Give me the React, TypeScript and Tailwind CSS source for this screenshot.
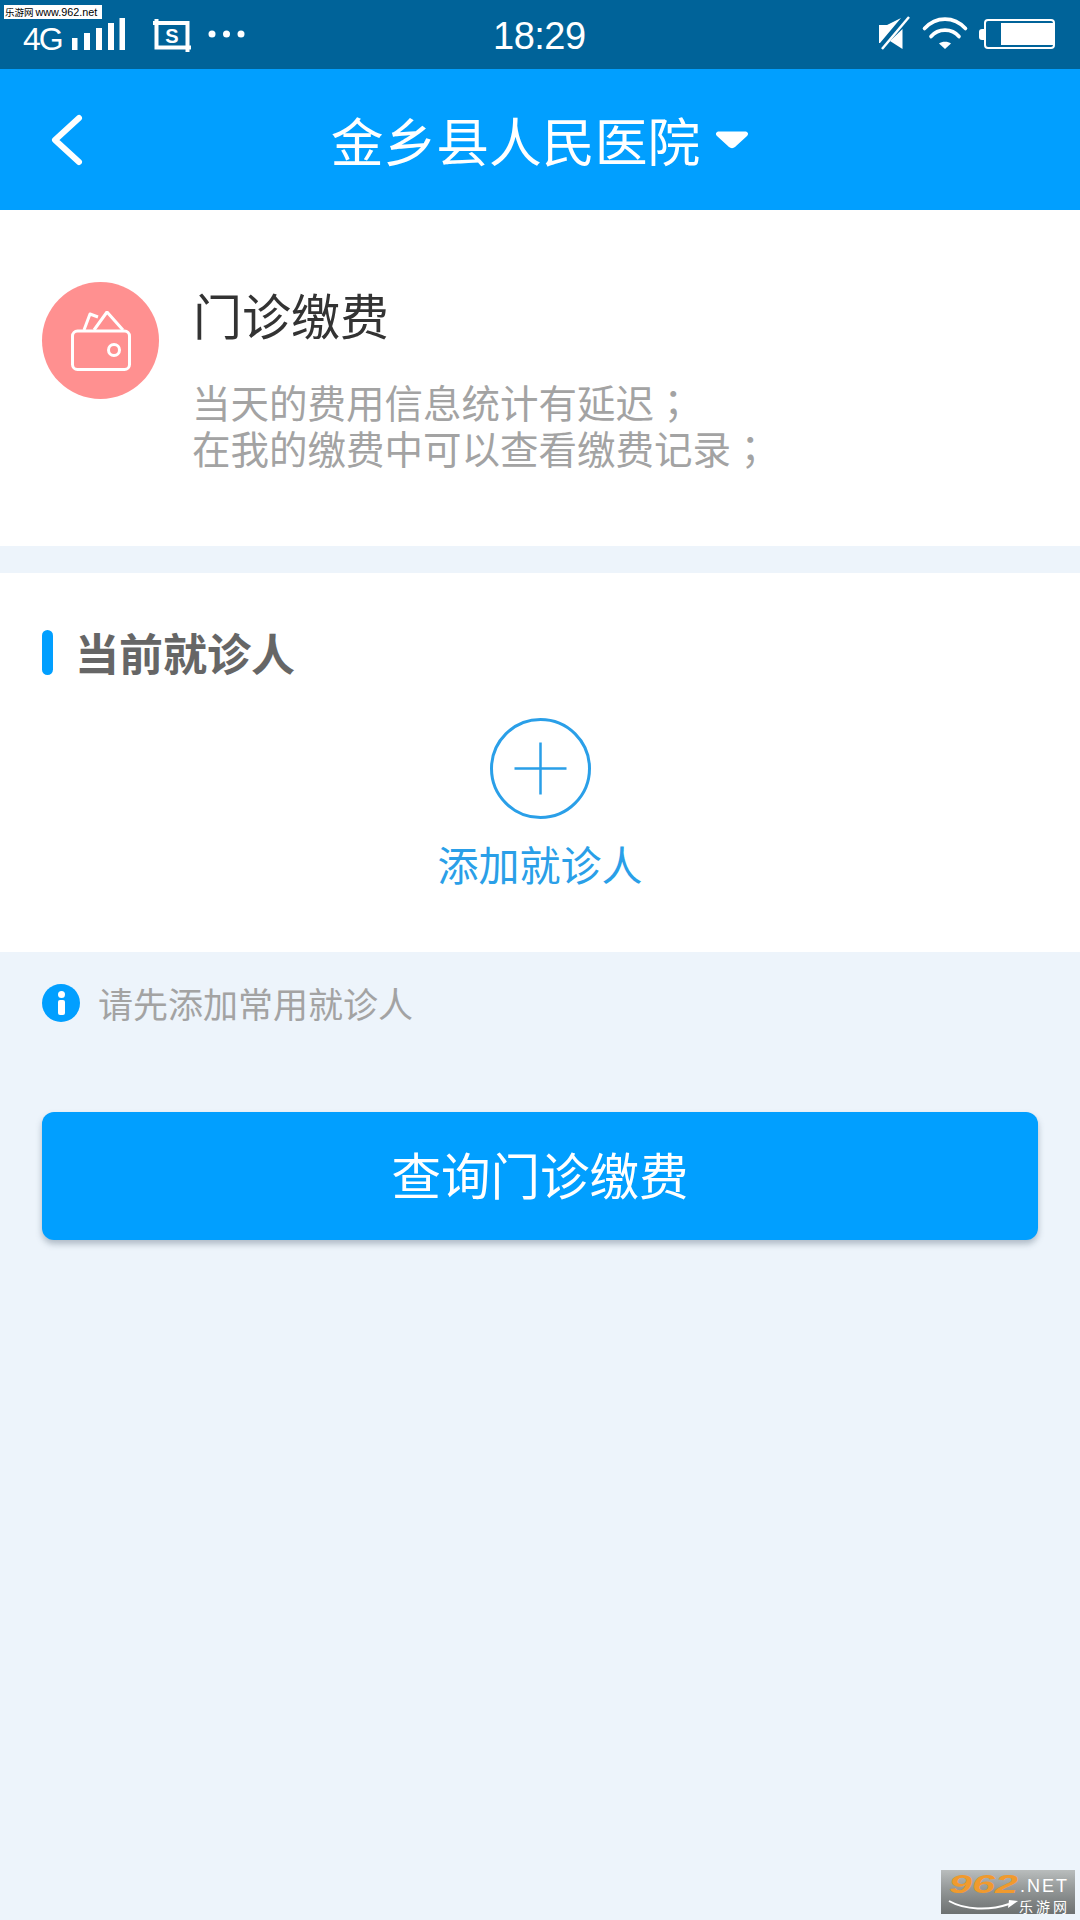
export default function App() {
  const cjk = "font-['Noto_Sans_CJK_SC','Liberation_Sans',sans-serif] font-normal";
  const tc = "font-['Noto_Sans_CJK_TC',sans-serif]";
  return (
    <div className={`relative w-[1080px] h-[1920px] overflow-hidden bg-[#edf4fb] ${cjk}`}>
      {/* watermark */}
      <div className="absolute z-10 left-[4px] top-[5px] h-[14px] w-[98px] bg-white flex items-center pl-[1px] text-[9.5px] leading-[14px] text-black whitespace-nowrap">
        <span>乐游网</span>
        <span className="ml-[2px] text-[10.8px] font-['Liberation_Sans',sans-serif]">www.962.net</span>
      </div>

      {/* status bar */}
      <div className="relative h-[69px] bg-[#006399] text-white">
        <div className="absolute left-[23px] top-[20px] text-[32px] leading-[38px] tracking-[-2px] font-['Liberation_Sans',sans-serif]">4G</div>
        <svg className="absolute left-0 top-0" width="260" height="69" viewBox="0 0 260 69" fill="#fff">
          <rect x="72" y="38" width="5.5" height="12" />
          <rect x="84" y="33" width="6" height="17" />
          <rect x="96" y="28" width="6" height="22" />
          <rect x="108" y="23" width="6" height="27" />
          <rect x="119.5" y="18" width="5.5" height="32" />
          <path d="M156.500 19V47.500H191M153 23H187.500V52" fill="none" stroke="#fff" strokeWidth="4" />
          <circle cx="212" cy="34" r="3.500" />
          <circle cx="226.500" cy="34" r="3.500" />
          <circle cx="241" cy="34" r="3.500" />
        </svg>
        <div className="absolute left-[160px] top-[24px] w-[24px] text-center text-[20px] leading-[24px] font-bold font-['Liberation_Sans',sans-serif]">S</div>
        <div className="absolute left-[493px] top-[14px] text-[38px] leading-[44px] tracking-[-0.5px] font-['Liberation_Sans',sans-serif]">18:29</div>
        <svg className="absolute left-[870px] top-[10px]" width="110" height="50" viewBox="870 10 110 50" fill="#fff">
          <path d="M879 25h8l14-7-21 25h-1z" />
          <path d="M902.500 29v20l-12.500-8z" />
          <path d="M882 49L909 17" stroke="#fff" strokeWidth="2.500" />
          <path d="M924.500 28.500C936 16 954 16 965.500 28.500" fill="none" stroke="#fff" strokeWidth="3.600" strokeLinecap="round" />
          <path d="M931 36.500C938 28 952 28 959 36.500" fill="none" stroke="#fff" strokeWidth="3.600" strokeLinecap="round" />
          <path d="M939 43.500c3-2.500 9-2.500 12 0l-6 5.500z" />
        </svg>
        <div className="absolute left-[979px] top-[29px] h-[11px] w-[5px] rounded-l-[3px] bg-white" />
        <div className="absolute left-[984px] top-[19px] h-[30px] w-[71px] rounded-[4px] border-2 border-white" />
        <div className="absolute left-[1001px] top-[23px] h-[22px] w-[52px] bg-white" />
      </div>

      {/* header */}
      <div className="relative h-[141px] bg-[#019fff] flex items-center justify-center text-white">
        <svg className="absolute left-[48px] top-[42px]" width="38" height="58" viewBox="0 0 38 58" fill="none">
          <path d="M31 7L7 29l24 22" stroke="#fff" strokeWidth="6" strokeLinecap="round" strokeLinejoin="round" />
        </svg>
        <div className="ml-[0px] mt-[-2px] text-[52.800px] leading-[60px] whitespace-nowrap">金乡县人民医院</div>
        <svg className="ml-[15px]" width="34" height="20" viewBox="0 0 34 20">
          <path d="M4 1.500h26c3 0 4 2.500 2 4.500L20 17c-1.500 1.500-4.500 1.500-6 0L2 6C0 4 1 1.500 4 1.500z" fill="#fff" />
        </svg>
      </div>

      {/* intro card */}
      <div className="h-[336px] bg-white flex items-start pl-[42px] pt-[72px]">
        <div className="w-[117px] h-[117px] rounded-full bg-[#ff9090] flex items-center justify-center shrink-0">
          <svg width="60" height="60" viewBox="0 0 60 60" fill="none" stroke="#fff" strokeWidth="3" strokeLinejoin="round">
            <rect x="1.500" y="20" width="57" height="38.500" rx="5" />
            <path d="M13 19L19 3l8 3M23 19L36 1l16 18" />
            <circle cx="43" cy="39" r="5.500" />
          </svg>
        </div>
        <div className="ml-[34px] mt-[2px]">
          <div className="text-[49px] leading-[60px] text-[#333333] whitespace-nowrap">门诊缴费</div>
          <div className="mt-[34px] ml-[-1px] text-[38.500px] leading-[46px] text-[#a3a3a3] whitespace-nowrap">
            <div>当天的费用信息统计有延迟<span className={tc}>；</span></div>
            <div>在我的缴费中可以查看缴费记录<span className={tc}>；</span></div>
          </div>
        </div>
      </div>

      {/* patient card */}
      <div className="mt-[27px] h-[379px] bg-white">
        <div className="flex items-center pl-[42px] pt-[54px]">
          <div className="w-[11px] h-[45px] rounded-full bg-[#019fff]" />
          <div className="ml-[22px] text-[44px] leading-[50px] font-bold text-[#666666] whitespace-nowrap">当前就诊人</div>
        </div>
        <div className="flex flex-col items-center mt-[41px]">
          <svg width="101" height="101" viewBox="0 0 101 101" fill="none" stroke="#2a9fe8">
            <circle cx="50.500" cy="50.500" r="49" strokeWidth="3" />
            <path d="M24.500 50.500h52M50.500 24.500v52" strokeWidth="2.500" />
          </svg>
          <div className="mt-[19px] text-[41px] leading-[50px] text-[#2a9fe8] whitespace-nowrap">添加就诊人</div>
        </div>
      </div>

      {/* tip */}
      <div className="flex items-center pl-[42px] pt-[31px]">
        <div className="w-[38px] h-[38px] rounded-full bg-[#019fff] flex flex-col items-center justify-center">
          <div className="w-[7px] h-[7px] rounded-full bg-white" />
          <div className="mt-[2px] w-[7px] h-[15px] rounded-[2px] bg-white" />
        </div>
        <div className="ml-[18px] text-[35px] leading-[40px] text-[#a3a3a3] whitespace-nowrap">请先添加常用就诊人</div>
      </div>

      {/* button */}
      <div className="mt-[89px] mx-[42px] h-[128px] pb-[4px] rounded-[12px] bg-[#019fff] shadow-[0_4px_6px_rgba(60,80,100,0.35)] flex items-center justify-center text-white text-[49.500px] leading-[60px]">
        查询门诊缴费
      </div>

      {/* corner logo */}
      <div className="absolute left-[941px] top-[1870px] w-[134px] h-[44px] bg-gradient-to-b from-[#b9bdbd] via-[#8f9393] to-[#6d7171]">
        <div className="absolute left-[8px] top-[1px] origin-left scale-x-[1.65] text-[25px] leading-[26px] font-bold italic text-[#f09a2e] font-['Liberation_Sans',sans-serif]">962</div>
        <div className="absolute left-[79px] top-[5px] text-[18px] leading-[22px] text-white font-['Liberation_Sans',sans-serif] tracking-[2px] whitespace-nowrap">.NET</div>
        <div className="absolute left-[78px] top-[28px] text-[14px] leading-[16px] text-white tracking-[3px] whitespace-nowrap">乐游网</div>
        <svg className="absolute left-[6px] top-[28px]" width="72" height="14" viewBox="0 0 72 14" fill="none">
          <path d="M2 3c16 9 40 10 60 3" stroke="#fff" strokeWidth="2" />
          <path d="M71 3l-10 7 1-8z" fill="#fff" />
        </svg>
      </div>
    </div>
  );
}
